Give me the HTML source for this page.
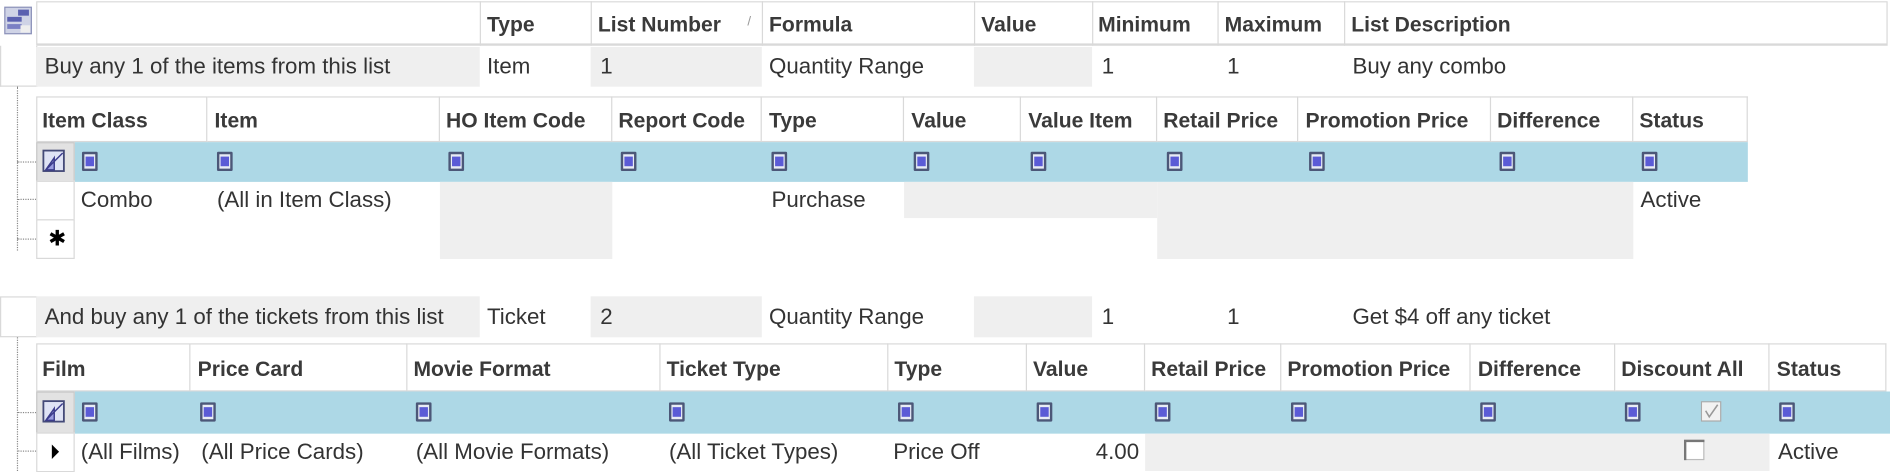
<!DOCTYPE html>
<html><head><meta charset="utf-8"><style>
html,body{margin:0;padding:0;background:#fff;overflow:hidden;width:1890px;height:471px}
#w{position:absolute;left:0;top:0;width:1568px;height:391px;transform:scale(1.2054,1.2046);transform-origin:0 0;font-family:"Liberation Sans",sans-serif;font-size:18.5px;color:#333}
.a{position:absolute;box-sizing:border-box}
.t{position:absolute;white-space:nowrap;line-height:20px}
.h{color:#3a3a3a;font-weight:bold;font-size:17.5px}
.g{background:#efefef}
.bl{background:#add8e6}
.hc{position:absolute;box-sizing:border-box;border:1px solid #d9d9d9;border-left:none;height:100%;top:0}
.f{position:absolute;width:13px;height:16px;box-sizing:border-box;border:2px solid #4c5778;background:#e8ecf5;border-radius:1px}
.f::after{content:"";position:absolute;left:1px;top:2px;width:7px;height:8px;background:#5b5bd6}
.sel{position:absolute;box-sizing:border-box;border:1px solid #d9d9d9;background:#fff}
.dv{position:absolute;border-left:1px dotted #888}
.dh{position:absolute;border-top:1px dotted #888;height:0}
</style></head><body><div id="w">

<svg class="a" style="left:3px;top:5px" width="24" height="24" viewBox="0 0 24 24">
<rect x="1" y="1" width="22" height="22" fill="#cfd3e6" stroke="#8a90b8"/>
<rect x="3" y="9" width="12" height="4" fill="#5a60b0"/><rect x="3" y="15" width="12" height="4" fill="#7b80c4"/>
<rect x="12" y="3" width="9" height="5" fill="#5a60b0"/><rect x="14" y="16" width="8" height="6" fill="#eee"/>
</svg>

<div class="a" style="left:30px;top:1px;width:1536px;height:37px;border:1px solid #d9d9d9;border-bottom:2px solid #d9d9d9"></div>
<div class="a" style="left:398px;top:1px;width:1px;height:37px;background:#d9d9d9"></div>
<div class="a" style="left:490px;top:1px;width:1px;height:37px;background:#d9d9d9"></div>
<div class="a" style="left:632px;top:1px;width:1px;height:37px;background:#d9d9d9"></div>
<div class="a" style="left:808px;top:1px;width:1px;height:37px;background:#d9d9d9"></div>
<div class="a" style="left:906px;top:1px;width:1px;height:37px;background:#d9d9d9"></div>
<div class="a" style="left:1010px;top:1px;width:1px;height:37px;background:#d9d9d9"></div>
<div class="a" style="left:1115px;top:1px;width:1px;height:37px;background:#d9d9d9"></div>
<span class="t h" style="left:404px;top:10px">Type</span>
<span class="t h" style="left:496px;top:10px">List Number</span>
<span class="t" style="left:620px;top:8px;font-size:11px;color:#999">/</span>
<span class="t h" style="left:638px;top:10px">Formula</span>
<span class="t h" style="left:814px;top:10px">Value</span>
<span class="t h" style="left:911px;top:10px">Minimum</span>
<span class="t h" style="left:1016px;top:10px">Maximum</span>
<span class="t h" style="left:1121px;top:10px">List Description</span>

<div class="sel" style="left:0;top:38px;width:31px;height:34px;border-top:none"></div>
<div class="a g" style="left:30px;top:39px;width:368px;height:33px"></div>
<div class="a g" style="left:490px;top:39px;width:142px;height:33px"></div>
<div class="a g" style="left:808px;top:39px;width:98px;height:33px"></div>
<span class="t" style="left:37px;top:45px">Buy any 1 of the items from this list</span>
<span class="t" style="left:404px;top:45px">Item</span>
<span class="t" style="left:498px;top:45px">1</span>
<span class="t" style="left:638px;top:45px">Quantity Range</span>
<span class="t" style="left:914px;top:45px">1</span>
<span class="t" style="left:1018px;top:45px">1</span>
<span class="t" style="left:1122px;top:45px">Buy any combo</span>

<div class="dv" style="left:14px;top:72px;height:136px"></div>
<div class="dh" style="left:14px;top:134px;width:16px"></div>
<div class="dh" style="left:14px;top:165px;width:16px"></div>
<div class="dh" style="left:14px;top:198px;width:16px"></div>

<div class="a" style="left:30px;top:80px;width:1420px;height:38px">
<div class="hc" style="left:0;width:142px;border-left:1px solid #d9d9d9"></div>
<div class="hc" style="left:142px;width:193px"></div>
<div class="hc" style="left:335px;width:143px"></div>
<div class="hc" style="left:478px;width:124px"></div>
<div class="hc" style="left:602px;width:118px"></div>
<div class="hc" style="left:720px;width:97px"></div>
<div class="hc" style="left:817px;width:113px"></div>
<div class="hc" style="left:930px;width:117px"></div>
<div class="hc" style="left:1047px;width:160px"></div>
<div class="hc" style="left:1207px;width:118px"></div>
<div class="hc" style="left:1325px;width:95px"></div>
</div>
<span class="t h" style="left:35px;top:90px">Item Class</span>
<span class="t h" style="left:178px;top:90px">Item</span>
<span class="t h" style="left:370px;top:90px">HO Item Code</span>
<span class="t h" style="left:513px;top:90px">Report Code</span>
<span class="t h" style="left:638px;top:90px">Type</span>
<span class="t h" style="left:756px;top:90px">Value</span>
<span class="t h" style="left:853px;top:90px">Value Item</span>
<span class="t h" style="left:965px;top:90px">Retail Price</span>
<span class="t h" style="left:1083px;top:90px">Promotion Price</span>
<span class="t h" style="left:1242px;top:90px">Difference</span>
<span class="t h" style="left:1360px;top:90px">Status</span>

<div class="a bl" style="left:62px;top:118px;width:1388px;height:33px"></div>
<div class="sel" style="left:30px;top:118px;width:32px;height:33px;background:#e2e2e2;border-color:#c8c8c8"></div>
<svg class="a" style="left:35px;top:124px" width="20" height="20" viewBox="0 0 20 20"><rect x="1" y="1" width="17" height="17" fill="#dfe3f5" stroke="#444a78" stroke-width="1.5"/><path d="M3 17 L17 3 M3 17 L10 7 L10 17Z" stroke="#3c3c8c" fill="#9a9ce0" stroke-width="1.2"/></svg>
<div class="f" style="left:68px;top:126px"></div>
<div class="f" style="left:180px;top:126px"></div>
<div class="f" style="left:372px;top:126px"></div>
<div class="f" style="left:515px;top:126px"></div>
<div class="f" style="left:640px;top:126px"></div>
<div class="f" style="left:758px;top:126px"></div>
<div class="f" style="left:855px;top:126px"></div>
<div class="f" style="left:968px;top:126px"></div>
<div class="f" style="left:1086px;top:126px"></div>
<div class="f" style="left:1244px;top:126px"></div>
<div class="f" style="left:1362px;top:126px"></div>

<div class="sel" style="left:30px;top:150px;width:32px;height:33px"></div>
<div class="sel" style="left:30px;top:182px;width:32px;height:33px"></div>
<span class="t" style="left:40px;top:188px;font-size:18px;color:#000">&#x2731;</span>
<div class="a g" style="left:365px;top:151px;width:143px;height:64px"></div>
<div class="a g" style="left:750px;top:151px;width:210px;height:30px"></div>
<div class="a g" style="left:960px;top:151px;width:395px;height:64px"></div>
<span class="t" style="left:67px;top:156px">Combo</span>
<span class="t" style="left:180px;top:156px">(All in Item Class)</span>
<span class="t" style="left:640px;top:156px">Purchase</span>
<span class="t" style="left:1361px;top:156px">Active</span>

<div class="sel" style="left:0;top:246px;width:31px;height:34px"></div>
<div class="a g" style="left:30px;top:246px;width:368px;height:34px"></div>
<div class="a g" style="left:490px;top:246px;width:142px;height:34px"></div>
<div class="a g" style="left:808px;top:246px;width:98px;height:34px"></div>
<span class="t" style="left:37px;top:253px">And buy any 1 of the tickets from this list</span>
<span class="t" style="left:404px;top:253px">Ticket</span>
<span class="t" style="left:498px;top:253px">2</span>
<span class="t" style="left:638px;top:253px">Quantity Range</span>
<span class="t" style="left:914px;top:253px">1</span>
<span class="t" style="left:1018px;top:253px">1</span>
<span class="t" style="left:1122px;top:253px">Get $4 off any ticket</span>

<div class="dv" style="left:14px;top:280px;height:111px"></div>
<div class="dh" style="left:14px;top:342px;width:16px"></div>
<div class="dh" style="left:14px;top:374px;width:16px"></div>

<div class="a" style="left:30px;top:285px;width:1535px;height:40px">
<div class="hc" style="left:0;width:128px;border-left:1px solid #d9d9d9"></div>
<div class="hc" style="left:128px;width:180px"></div>
<div class="hc" style="left:308px;width:210px"></div>
<div class="hc" style="left:518px;width:189px"></div>
<div class="hc" style="left:707px;width:115px"></div>
<div class="hc" style="left:822px;width:98px"></div>
<div class="hc" style="left:920px;width:113px"></div>
<div class="hc" style="left:1033px;width:157px"></div>
<div class="hc" style="left:1190px;width:120px"></div>
<div class="hc" style="left:1310px;width:128px"></div>
<div class="hc" style="left:1438px;width:97px"></div>
</div>
<span class="t h" style="left:35px;top:296px">Film</span>
<span class="t h" style="left:164px;top:296px">Price Card</span>
<span class="t h" style="left:343px;top:296px">Movie Format</span>
<span class="t h" style="left:553px;top:296px">Ticket Type</span>
<span class="t h" style="left:742px;top:296px">Type</span>
<span class="t h" style="left:857px;top:296px">Value</span>
<span class="t h" style="left:955px;top:296px">Retail Price</span>
<span class="t h" style="left:1068px;top:296px">Promotion Price</span>
<span class="t h" style="left:1226px;top:296px">Difference</span>
<span class="t h" style="left:1345px;top:296px">Discount All</span>
<span class="t h" style="left:1474px;top:296px">Status</span>

<div class="a bl" style="left:62px;top:325px;width:1506px;height:35px"></div>
<div class="sel" style="left:30px;top:325px;width:32px;height:35px;background:#e2e2e2;border-color:#c8c8c8"></div>
<svg class="a" style="left:35px;top:332px" width="20" height="20" viewBox="0 0 20 20"><rect x="1" y="1" width="17" height="17" fill="#dfe3f5" stroke="#444a78" stroke-width="1.5"/><path d="M3 17 L17 3 M3 17 L10 7 L10 17Z" stroke="#3c3c8c" fill="#9a9ce0" stroke-width="1.2"/></svg>
<div class="f" style="left:68px;top:334px"></div>
<div class="f" style="left:166px;top:334px"></div>
<div class="f" style="left:345px;top:334px"></div>
<div class="f" style="left:555px;top:334px"></div>
<div class="f" style="left:745px;top:334px"></div>
<div class="f" style="left:860px;top:334px"></div>
<div class="f" style="left:958px;top:334px"></div>
<div class="f" style="left:1071px;top:334px"></div>
<div class="f" style="left:1228px;top:334px"></div>
<div class="f" style="left:1348px;top:334px"></div>
<div class="f" style="left:1476px;top:334px"></div>
<svg class="a" style="left:1411px;top:333px" width="18" height="18" viewBox="0 0 18 18"><rect x="0.5" y="0.5" width="16" height="16" fill="#f2f2f2" stroke="#aaa"/><path d="M4 8 L7 13 L14 3" stroke="#999" fill="none" stroke-width="1.3"/></svg>

<div class="sel" style="left:30px;top:359px;width:32px;height:33px"></div>
<svg class="a" style="left:41px;top:368px" width="10" height="14" viewBox="0 0 10 14"><path d="M2 1 L8 7 L2 13Z" fill="#000"/></svg>
<div class="a g" style="left:950px;top:360px;width:518px;height:31px"></div>
<svg class="a" style="left:1397px;top:365px" width="18" height="18" viewBox="0 0 18 18"><rect x="0.5" y="0.5" width="16" height="16" fill="#fff" stroke="#bbb"/><path d="M1 17 L1 1 L17 1" stroke="#777" fill="none" stroke-width="2"/></svg>
<span class="t" style="left:67px;top:365px">(All Films)</span>
<span class="t" style="left:167px;top:365px">(All Price Cards)</span>
<span class="t" style="left:345px;top:365px">(All Movie Formats)</span>
<span class="t" style="left:555px;top:365px">(All Ticket Types)</span>
<span class="t" style="left:741px;top:365px">Price Off</span>
<span class="t" style="right:623px;top:365px">4.00</span>
<span class="t" style="left:1475px;top:365px">Active</span>

</div></body></html>
